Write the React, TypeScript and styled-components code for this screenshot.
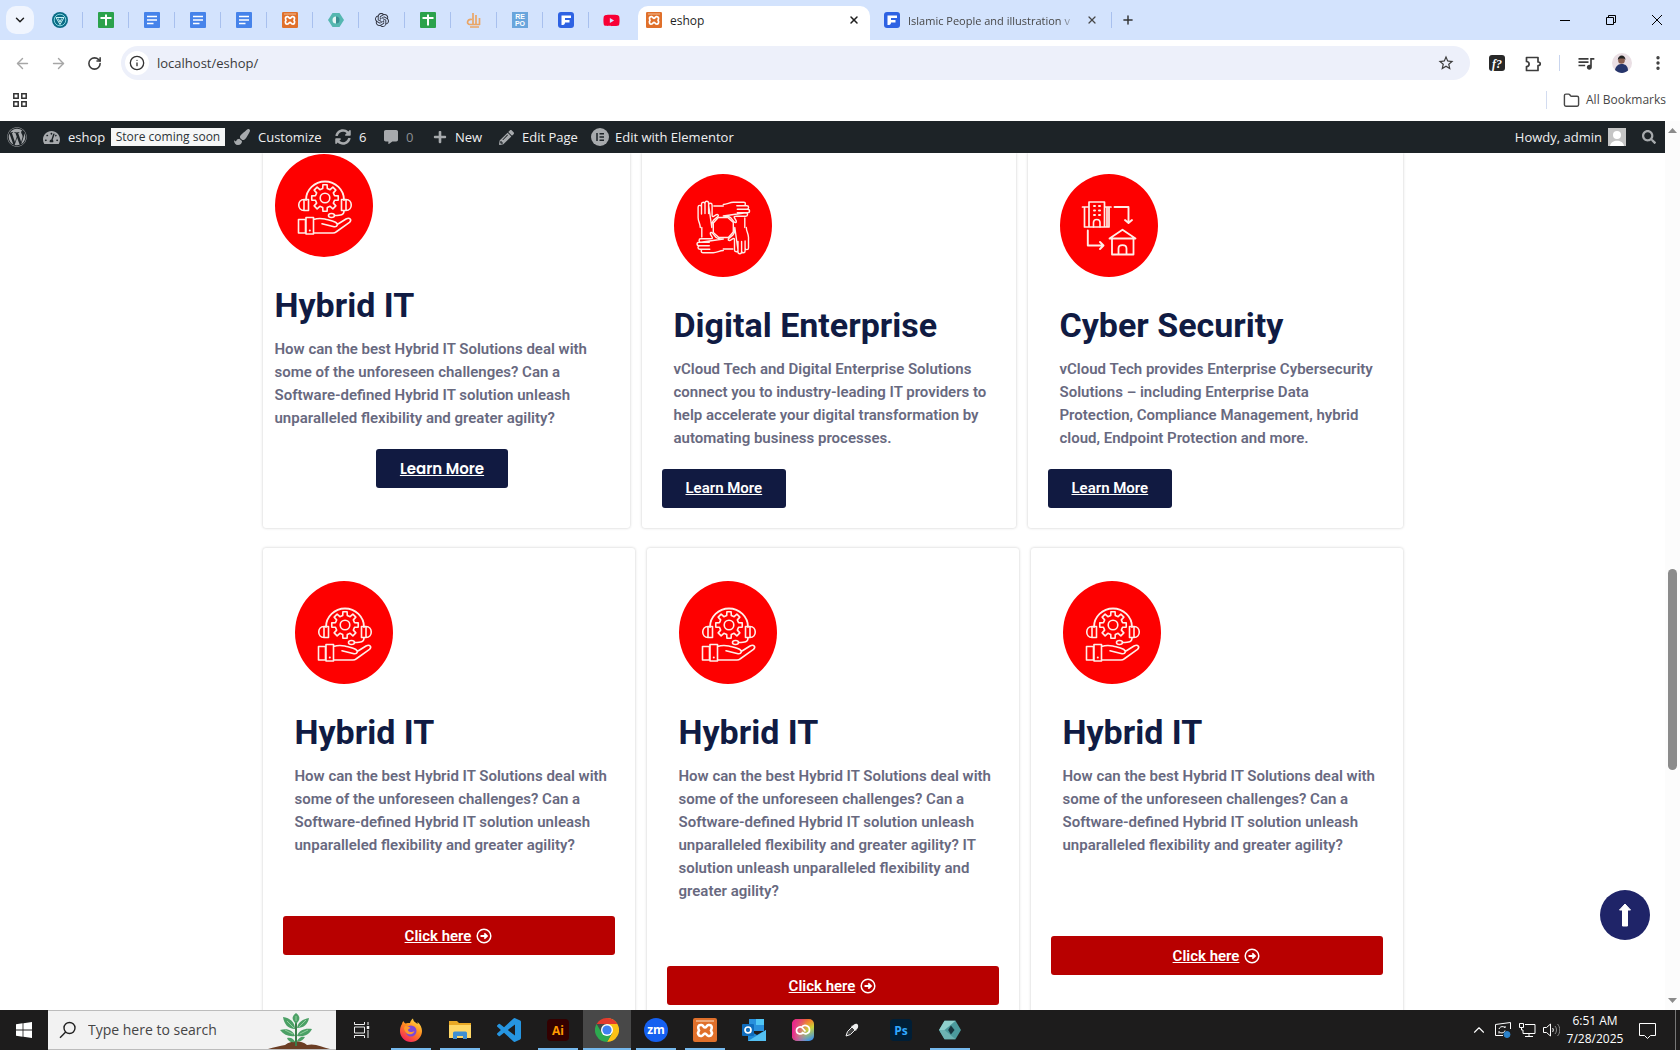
import React from "react";
import styled, { createGlobalStyle, css } from "styled-components";
import {
  FaWordpress,
  FaTachometerAlt,
  FaPaintBrush,
  FaSyncAlt,
  FaCommentAlt,
  FaPlus,
  FaPencilAlt,
  FaSearch,
  FaYoutube,
} from "react-icons/fa";
import { SiOpenai } from "react-icons/si";
import { MdOutlineQueueMusic, MdStarBorder } from "react-icons/md";
import {
  ArrowLeft,
  ArrowRight,
  ChevronDown,
  ChevronUp,
  EllipsisVertical,
  Folder,
  Info,
  Plus,
  RotateCw,
  X,
} from "lucide-react";

const UI_FONT = `"Segoe UI", "Open Sans", "Noto Sans", sans-serif`;
const BODY_FONT = `Roboto, "Open Sans", sans-serif`;

const GlobalStyle = createGlobalStyle`
  *, *::before, *::after { box-sizing: border-box; }
  body { margin: 0; background: #fff; font-family: ${UI_FONT}; overflow: hidden; }
  button, input { font: inherit; color: inherit; }
  h2, p { margin: 0; }
  svg { display: block; flex: none; }
`;

const Desktop = styled.div`
  height: 100vh;
  display: flex;
  flex-direction: column;
  overflow: hidden;
`;

const plainButton = css`
  display: flex;
  align-items: center;
  justify-content: center;
  border: 0;
  padding: 0;
  background: none;
`;

/* ---------- browser chrome ---------- */

const TabStrip = styled.div`
  flex: none;
  height: 40px;
  display: flex;
  align-items: flex-end;
  background: #d3e3fd;
`;

const TabSearchButton = styled.button`
  ${plainButton}
  width: 28px;
  height: 28px;
  margin: 0 3px 6px 6px;
  border-radius: 10px;
  background: #f0f5fe;
  color: #1f1f1f;
`;

const PinnedTab = styled.button<{ $divided: boolean }>`
  ${plainButton}
  width: 46px;
  height: 16px;
  margin-bottom: 12px;
  border-right: 1px solid ${(p) => (p.$divided ? "#a8c0ee" : "transparent")};
`;

const Tab = styled.div<{ $active?: boolean }>`
  display: flex;
  align-items: center;
  gap: 8px;
  width: ${(p) => (p.$active ? 232 : 238)}px;
  height: 34px;
  margin-left: 3px;
  padding: 0 ${(p) => (p.$active ? "8px 6px 8px" : "11px 6px 11px")};
  border-radius: 10px 10px 0 0;
  font-size: ${(p) => (p.$active ? 12 : 11)}px;
  line-height: 18px;
  color: ${(p) => (p.$active ? "#1f1f1f" : "#474747")};
  background: ${(p) => (p.$active ? "#fff" : "transparent")};
`;

const TabTitle = styled.span<{ $fade?: boolean }>`
  flex: 1;
  min-width: 0;
  padding-top: 2px;
  overflow: hidden;
  white-space: nowrap;
  ${(p) => p.$fade && "mask-image: linear-gradient(90deg, #000 90%, transparent);"}
`;

const InlineButton = styled.button`
  ${plainButton}
  width: 16px;
  height: 16px;
`;

const NewTab = styled.button`
  ${plainButton}
  width: 33px;
  height: 16px;
  margin-bottom: 12px;
  border-left: 1px solid #a8c0ee;
  color: #333;
`;

const WindowControls = styled.div`
  margin-left: auto;
  display: flex;
  align-self: stretch;
`;

const WindowButton = styled.button`
  ${plainButton}
  width: 46px;
  height: 40px;
`;

const Toolbar = styled.div`
  flex: none;
  height: 46px;
  display: flex;
  align-items: center;
  padding: 0 4px;
  background: #fff;
`;

const ToolButton = styled.button<{ $dim?: boolean }>`
  ${plainButton}
  width: 36px;
  height: 34px;
  color: ${(p) => (p.$dim ? "#a6a6a6" : "#3c3c3c")};
`;

const Omnibox = styled.label`
  flex: 1;
  height: 34px;
  display: flex;
  align-items: center;
  gap: 8px;
  margin: 0 9px;
  padding: 0 6px 0 4px;
  border-radius: 17px;
  background: #edf0fa;
`;

const SiteInfo = styled.span`
  width: 24px;
  height: 24px;
  display: flex;
  align-items: center;
  justify-content: center;
  border-radius: 12px;
  background: #fff;
  color: #333;
`;

const UrlInput = styled.input`
  flex: 1;
  border: 0;
  outline: 0;
  padding: 0;
  background: none;
  font-size: 13px;
  line-height: 20px;
  color: #3a3a3a;
`;

const ToolDivider = styled.span`
  width: 1px;
  height: 16px;
  margin: 0 8px;
  background: #c9d5ee;
`;

const BookmarksBar = styled.div`
  flex: none;
  height: 35px;
  display: flex;
  align-items: center;
  justify-content: space-between;
  padding: 0 14px 7px 12px;
  background: #fff;
  color: #474747;
`;

const AllBookmarks = styled.button`
  ${plainButton}
  gap: 6px;
  height: 18px;
  padding-left: 16px;
  border-left: 1px solid #d3dcf0;
  font-size: 12px;
  line-height: 18px;
`;

/* ---------- web page ---------- */

const Viewport = styled.div`
  flex: 1;
  min-height: 0;
  display: flex;
  position: relative;
  background: #fff;
`;

const Page = styled.div`
  flex: 1;
  min-width: 0;
  display: flex;
  flex-direction: column;
  overflow: hidden;
`;

const AdminBar = styled.nav`
  flex: none;
  height: 32px;
  display: flex;
  align-items: center;
  padding: 0 8px 0 7px;
  background: #1d2327;
  color: #f0f0f1;
  font-size: 13px;
  line-height: 18px;
  white-space: nowrap;
`;

const AdminLink = styled.a<{ $gap?: number; $width?: number }>`
  display: flex;
  align-items: center;
  gap: ${(p) => p.$gap ?? 8}px;
  width: ${(p) => (p.$width ? `${p.$width}px` : "auto")};
  color: inherit;
  text-decoration: none;
  svg { color: #a7aaad; }
`;

const StoreBadge = styled.a`
  width: 114px;
  height: 18px;
  margin-right: 9px;
  background: #f6f7f7;
  color: #2c3338;
  font-size: 12px;
  line-height: 18px;
  text-align: center;
  text-decoration: none;
`;

const Muted = styled.span`
  color: #8c8f94;
`;

const AdminRight = styled.div`
  margin-left: auto;
  display: flex;
  align-items: center;
  gap: 15px;
`;

const SearchLink = styled.button`
  ${plainButton}
  width: 16px;
  height: 16px;
  color: #a7aaad;
`;

const Content = styled.main`
  flex: 1;
  min-height: 0;
  overflow: hidden;
`;

const Services = styled.div`
  max-width: 1140px;
  margin: 0 auto;
  display: flex;
  flex-direction: column;
  gap: 20px;
  font-family: ${BODY_FONT};
`;

const CardRow = styled.section<{ $columns: string }>`
  display: grid;
  grid-template-columns: ${(p) => p.$columns};
  gap: 12px;
`;

const Card = styled.article<{ $kind: "flush" | "upper" | "lower" }>`
  display: flex;
  flex-direction: column;
  border-radius: ${(p) => (p.$kind === "lower" ? "3px" : "0 0 3px 3px")};
  box-shadow: 0 0 3px rgba(0, 0, 0, 0.22);
  background: #fff;
  padding: ${(p) =>
    p.$kind === "flush" ? "1px 20px 20px 0" : p.$kind === "upper" ? "21px 20px 20px" : "33px 20px 60px"};
`;

const ImageBox = styled.div`
  padding-left: 12px;
  svg { width: 98px; height: 103px; }
`;

const Title = styled.h2`
  margin: 28px 0 13px;
  color: #101b43;
  font-size: 34px;
  font-weight: 700;
  line-height: 40px;
`;

const Description = styled.p`
  color: #68697f;
  font-size: 15px;
  font-weight: 600;
  line-height: 23px;
`;

const LearnMore = styled.a<{ $centered?: boolean }>`
  align-self: ${(p) => (p.$centered ? "center" : "flex-start")};
  margin-top: 19px;
  margin-left: ${(p) => (p.$centered ? "12px" : "0")};
  padding: 0 24px;
  border-radius: 3px;
  background: #111a41;
  color: #fff;
  font-family: ${(p) => (p.$centered ? "Poppins, Inter, sans-serif" : BODY_FONT)};
  font-size: 15px;
  font-weight: 600;
  line-height: 39px;
`;

const ClickHere = styled.a<{ $space: number }>`
  display: flex;
  align-items: center;
  justify-content: center;
  gap: 5px;
  height: 39px;
  margin-top: ${(p) => p.$space}px;
  border-radius: 3px;
  background: #b80000;
  color: #fff;
  font-size: 15px;
  font-weight: 600;
  text-decoration: none;
  span { text-decoration: underline; }
`;

const ToTop = styled.button`
  ${plainButton}
  position: absolute;
  right: 30px;
  bottom: 70px;
  width: 50px;
  height: 50px;
  border-radius: 25px;
  background: #1f2468;
`;

const ScrollTrack = styled.div`
  flex: none;
  width: 15px;
  display: flex;
  flex-direction: column;
  align-items: center;
  padding: 5px 0;
  background: #fcfcfc;
`;

const ScrollSpace = styled.div<{ $grow: number }>`
  flex: ${(p) => p.$grow} 1 0;
`;

const ScrollThumb = styled.div`
  flex: 201 1 0;
  width: 9px;
  border-radius: 5px;
  background: #8b8b8b;
`;

/* ---------- taskbar ---------- */

const Taskbar = styled.footer`
  flex: none;
  height: 40px;
  display: flex;
  align-items: stretch;
  background: #1d1c1c;
  color: #fff;
`;

const StartButton = styled.button`
  ${plainButton}
  width: 48px;
`;

const TaskSearch = styled.label`
  width: 288px;
  display: flex;
  align-items: center;
  gap: 11px;
  padding-left: 11px;
  background: #f2f2f2;
  border: solid #bcbcbc;
  border-width: 1px 0;
  color: #333;
`;

const TaskSearchInput = styled.input`
  flex: 1;
  min-width: 0;
  border: 0;
  padding: 0;
  outline: 0;
  background: none;
  font-size: 14px;
  line-height: 20px;
  &::placeholder { color: #454545; opacity: 1; }
`;

const TaskList = styled.div`
  display: flex;
  gap: 1px;
  padding-left: 2px;
`;

const TaskButton = styled.button<{ $state: "idle" | "open" | "active" }>`
  ${plainButton}
  width: 48px;
  background: ${(p) =>
    p.$state === "active"
      ? "linear-gradient(#76b9ed, #76b9ed) bottom / 48px 2px no-repeat #484848"
      : p.$state === "open"
      ? "linear-gradient(#76b9ed, #76b9ed) bottom / 40px 2px no-repeat"
      : "none"};
`;

const Tray = styled.div`
  margin-left: auto;
  display: flex;
  align-items: center;
`;

const TrayButton = styled.button<{ $wide?: boolean }>`
  ${plainButton}
  width: ${(p) => (p.$wide ? 40 : 24)}px;
  height: 40px;
`;

const Clock = styled.time`
  width: 64px;
  display: flex;
  flex-direction: column;
  align-items: center;
  font-size: 12px;
  line-height: 18px;
  white-space: nowrap;
`;

const ShowDesktop = styled.button`
  width: 5px;
  height: 40px;
  margin-left: 8px;
  padding: 0;
  border: 0;
  border-left: 1px solid #777;
  background: none;
`;

/* ---------- drawings ---------- */

const gearPath = (cx: number, cy: number, outer: number, inner: number, teeth: number) => {
  const points: string[] = [];
  const step = (Math.PI * 2) / teeth;
  for (let i = 0; i < teeth; i++) {
    const a = i * step - Math.PI / 2;
    [
      [inner, -0.3],
      [outer, -0.2],
      [outer, 0.2],
      [inner, 0.3],
    ].forEach(([r, k]) => {
      points.push(`${(cx + r * Math.cos(a + k * step)).toFixed(2)} ${(cy + r * Math.sin(a + k * step)).toFixed(2)}`);
    });
  }
  return `M${points.join("L")}Z`;
};

const Disc = ({ children, label }: { children: React.ReactNode; label: string }) => (
  <svg viewBox="0 0 98 103" preserveAspectRatio="none" role="img" aria-label={label}>
    <ellipse cx="49" cy="51.5" rx="49" ry="51.5" fill="#fe0000" />
    <g fill="none" stroke="#ffeee8" strokeWidth="1.6" strokeLinejoin="round" strokeLinecap="round">
      {children}
    </g>
  </svg>
);

const SupportArt = () => (
  <Disc label="Support">
    <path d={gearPath(50, 44, 13.4, 9.8, 8)} />
    <circle cx="50" cy="44" r="4.8" />
    <path d="M31 46a19 18.500 0 0 1 38 0" strokeWidth="1.800" />
    <path d="M29 45.500c-7 0-7 11 0 11zM29 45.500h4.500v11h-4.500M71 45.500c7 0 7 11 0 11zM71 45.500h-4.500v11h4.500M69 57c0 4-3 4.500-9.500 4.500" />
    <ellipse cx="56.500" cy="61.500" rx="3" ry="2" />
    <path d="M23.500 65.500h7v13.500h-7zM31 63.500h7.500v16.500h-7.500zM38.500 65.500c6-2 9-1 12-.3 4 1 7 1.500 10 3 3 1.800 2 5-1.500 4.500l-12-3M63 70l8-5c4-2 6 1 3.500 3.300L61 78q-1 1-3 1H38.500" />
    <path d="M34.800 76.500v.1" strokeWidth="2" />
  </Disc>
);

const TeamArt = () => (
  <Disc label="Teamwork">
    <g transform="translate(49.300 53.500)" strokeWidth="1.400">
      {[0, 90, 180, 270].map((r) => (
        <g key={r} transform={`rotate(${r})`}>
          <path d="M-23 0c0-4-2.200-6-2.200-10v-10.500c0-2.200 3.400-2.200 3.400 0v7M-21.800-20.500v-3c0-2.400 3.500-2.400 3.500 0V-14M-18.300-23.500v-.8c0-2.600 3.600-2.600 3.600 0V-14M-14.700-22.500c0-2.300 3.500-2.300 3.500 0v9.500c0 2 .2 2.600 1.500 1.800l2.800-1.600c2.300-.8 2.600 1.200.8 2.400l-3.600 3c-1.300 1.500-1.800 3-1.800 7.400z" />
          <path d="M-21.500 0v9.500M-10-4.500L-5-10H4" />
        </g>
      ))}
    </g>
  </Disc>
);

const OfficeArt = () => (
  <Disc label="Office and home">
    <path d="M29 53V28h15.500v25M22.500 33H29M44.500 33H51M24.500 33v20h24.500V33M47 34v19" strokeWidth="1.700" />
    <path d="M33.500 53v-4.500c0-4 6.500-4 6.500 0V53" />
    {[32, 36.5, 41].map((y) => (
      <path key={y} d={`M34 ${y}h1M39 ${y}h1`} strokeWidth="2" />
    ))}
    <path d="M54.500 33h14v15.500M65 46l3.500 3 3.500-3M27.800 56.500v15h15.500M40 68l3.500 3.500L40 75" strokeWidth="1.900" />
    <path d="M49.500 64.500l13-8.800 13 8.800zM52 64.500V80.500h21.500v-16M58.500 80.500v-6c0-4.500 8-4.500 8 0v6" strokeWidth="1.800" />
  </Disc>
);

const CircleArrow = () => (
  <svg width="16" height="16" viewBox="0 0 16 16" fill="none" stroke="#fff" strokeWidth="1.500" aria-hidden="true">
    <circle cx="8" cy="8" r="6.800" />
    <path d="M4.500 8h6M8.300 5.300L11 8l-2.700 2.700" strokeWidth="1.800" />
  </svg>
);

const GemIcon = () => (
  <svg width="16" height="16" viewBox="0 0 16 16">
    <circle cx="8" cy="8" r="8" fill="#0b6c86" />
    <circle cx="8" cy="8" r="5.800" fill="none" stroke="#7fd3dd" />
    <path d="M4 5.500h8L8 12.500zM6.300 6.500L8 10l1.700-3.500" fill="none" stroke="#c8f2f4" />
  </svg>
);

const SheetIcon = () => (
  <svg width="16" height="16" viewBox="0 0 16 16">
    <rect width="16" height="16" rx="1" fill="#2ba24c" />
    <path d="M2.500 6h11M8 2.500v11" stroke="#fff" strokeWidth="2" />
  </svg>
);

const DocIcon = () => (
  <svg width="16" height="16" viewBox="0 0 16 16">
    <rect width="16" height="16" rx="1" fill="#4683ea" />
    <path d="M3 4.500h10M3 8h10M3 11.500h6.500" stroke="#fff" strokeWidth="1.600" />
  </svg>
);

const XamppIcon = ({ size = 16 }: { size?: number }) => (
  <svg width={size} height={size} viewBox="0 0 24 24">
    <rect width="24" height="24" rx="2" fill="#e0702b" />
    <path
      d="M8.500 7C5 6.500 4.500 9.500 6 12.500c-2 3-.5 6 2.500 5.500 2-.3 2-2.500 3.500-2.500s1.500 2.200 3.500 2.500c3 .5 4.500-2.500 2.500-5.500 1.500-3 1-6-2.500-5.500-2 .3-2 2.500-3.500 2.500S10.500 7.300 8.500 7z"
      fill="none"
      stroke="#fff"
      strokeWidth="2.600"
    />
    <path d="M3 3h18" stroke="#f6cfae" strokeWidth="1.200" />
  </svg>
);

const HexIcon = ({ size = 16 }: { size?: number }) => (
  <svg width={size} height={size} viewBox="0 0 24 24">
    <path d="M6 2h12l6 10-6 10H6L0 12z" fill="#4b9a9c" />
    <path d="M6 2h12l-6 5-6 5-6 0z" fill="#8fd0cd" />
    <path d="M0 12h6l6 5 6 5H6z" fill="#6db3b2" />
    <path d="M13 7l4 5-4 5-3-5z" fill="#16343d" />
  </svg>
);

const TealDot = () => (
  <svg width="16" height="16" viewBox="0 0 16 16">
    <path d="M4.500 1h7L16 8l-4.500 7h-7L0 8z" fill="#55b7b0" />
    <path d="M8 4.500v7a3.500 3.500 0 0 1 0-7z" fill="#e8f7f6" />
    <path d="M8 4.500a3.500 3.500 0 0 1 0 7z" fill="#398e91" />
  </svg>
);

const SignIcon = () => (
  <svg width="16" height="16" viewBox="0 0 16 16" fill="none" stroke="#eaa565" strokeWidth="1.700">
    <path d="M7 1v11M10 3v9M13.500 6v7M6 7.500c-5-1-6 5-2 5h10M4 15h9" />
  </svg>
);

const RepoIcon = () => (
  <svg width="16" height="16" viewBox="0 0 16 16">
    <rect width="16" height="16" fill="#69a5dc" />
    <text x="8" y="7.300" fill="#fff" fontFamily="Liberation Sans" fontWeight="700" fontSize="7" textAnchor="middle">RE</text>
    <text x="8" y="14" fill="#fff" fontFamily="Liberation Sans" fontWeight="700" fontSize="7" textAnchor="middle">PO</text>
  </svg>
);

const FlagIcon = () => (
  <svg width="16" height="16" viewBox="0 0 16 16">
    <rect width="16" height="16" rx="3" fill="#2e62e3" />
    <path d="M3.500 13V3.500h9.500v2.600H7v2h4.500v2.400H7c0 2-1 2.500-3.500 2.500z" fill="#fff" />
  </svg>
);

const ElementorIcon = () => (
  <svg width="18" height="18" viewBox="0 0 18 18">
    <circle cx="9" cy="9" r="9" fill="#a7aaad" />
    <path d="M6 5v8M8.500 5.800H13M8.500 9H13M8.500 12.200H13" stroke="#1d2327" strokeWidth="1.500" />
  </svg>
);

const PuzzleIcon = () => (
  <svg width="17" height="17" viewBox="0 0 17 17" fill="none" stroke="#3c3c3c" strokeWidth="1.700" strokeLinejoin="round">
    <path d="M1.500 2.500H13V7c3 0 3 3.600 0 3.600v4.900H1.500v-4c3.500 0 3.500-5 0-5z" />
  </svg>
);

const SquareBadge = ({ bg, fg, text }: { bg: string; fg: string; text: string }) => (
  <svg width="22" height="22" viewBox="0 0 22 22">
    <rect width="22" height="22" rx="4" fill={bg} />
    <text x="11" y="15.500" textAnchor="middle" fill={fg} fontSize="12" fontWeight="700" fontFamily="Open Sans">{text}</text>
  </svg>
);

const FirefoxIcon = () => (
  <svg width="24" height="24" viewBox="0 0 24 24">
    <defs>
      <linearGradient id="fx" x1="0.8" y1="0" x2="0.2" y2="1">
        <stop offset="0" stopColor="#ffe14a" />
        <stop offset="0.45" stopColor="#ff8a1f" />
        <stop offset="1" stopColor="#f5195f" />
      </linearGradient>
    </defs>
    <path d="M3 6c0-1 .5-2 1.500-3 .3 1.200 1 2 2 2.500C8 5 9.500 5 11 5c.5-2 1.500-3.500 3-4.500C14.500 4 17 4.500 18.500 6c.2-.8.2-1.500 0-2 3 2.500 4.500 6 4.500 9a11 11 0 0 1-22 0c0-3 .7-5 2-7z" fill="url(#fx)" />
    <circle cx="12" cy="13" r="5.500" fill="#7b48d8" />
    <path d="M6 8c2 0 4 .5 5.500 2C10 11 9 11 9 12.500c1.500 2 4.500 2 6.500.5-1 4-7 4.500-9 1S5 10 6 8z" fill="#ff9a2b" />
  </svg>
);

const ExplorerIcon = () => (
  <svg width="24" height="20" viewBox="0 0 24 20">
    <path d="M1 1h8l2 2h12v14H1z" fill="#e9a825" />
    <path d="M1 5h22v13H1z" fill="#ffd766" />
    <path d="M5 19v-6q0-1.500 1.500-1.500h11Q19 11.500 19 13v6h-4v-3H9v3z" fill="#3f8fd0" />
  </svg>
);

const CodeIcon = () => (
  <svg width="24" height="24" viewBox="0 0 24 24">
    <path fill="#2695e0" d="M23.150 2.587L18.210.210a1.494 1.494 0 0 0-1.705.290l-9.460 8.630-4.120-3.128a.999.999 0 0 0-1.276.057L.327 7.261A1 1 0 0 0 .326 8.740L3.899 12 .326 15.260a1 1 0 0 0 .001 1.479L1.650 17.940a.999.999 0 0 0 1.276.057l4.120-3.128 9.460 8.630a1.492 1.492 0 0 0 1.704.290l4.942-2.377A1.500 1.500 0 0 0 24 20.060V3.939a1.500 1.500 0 0 0-.850-1.352zm-5.146 14.861L10.826 12l7.178-5.448v10.896z" />
  </svg>
);

const ChromeIcon = () => (
  <svg width="24" height="24" viewBox="0 0 24 24">
    <path d="M12 12V0a12 12 0 0 1 10.400 6 12 12 0 0 1-10.400 18l5.200-9z" fill="#fbc116" />
    <path d="M1.600 6a12 12 0 0 1 20.800 0H12z" fill="#e33b2e" />
    <path d="M1.600 6A12 12 0 0 0 12 24l5.200-9H6.800z" fill="#2da94f" />
    <circle cx="12" cy="12" r="6" fill="#fff" />
    <circle cx="12" cy="12" r="4.600" fill="#3f80f0" />
  </svg>
);

const ZoomIcon = () => (
  <svg width="24" height="24" viewBox="0 0 24 24">
    <circle cx="12" cy="12" r="12" fill="#1560f0" />
    <text x="12" y="16" textAnchor="middle" fill="#fff" fontSize="12" fontWeight="700" fontFamily="Open Sans">zm</text>
  </svg>
);

const OutlookIcon = () => (
  <svg width="24" height="22" viewBox="0 0 24 22">
    <path d="M7 0h15v12H7z" fill="#2890dc" />
    <path d="M14 0h8v6h-8z" fill="#4fc5f4" />
    <path d="M6 11l9 5 9-5v11H6z" fill="#1e88d6" />
    <path d="M24 11L6 22h18z" fill="#54c0f2" />
    <rect y="5" width="12" height="12" rx="1" fill="#0f6cbd" />
    <circle cx="6" cy="11" r="3" fill="none" stroke="#fff" strokeWidth="1.700" />
  </svg>
);

const CreativeIcon = () => (
  <svg width="22" height="22" viewBox="0 0 22 22">
    <defs>
      <linearGradient id="cc" x1="0.3" y1="0" x2="0.8" y2="1">
        <stop offset="0" stopColor="#f0402d" />
        <stop offset="0.3" stopColor="#f08b2d" />
        <stop offset="0.55" stopColor="#c9d23a" />
        <stop offset="1" stopColor="#3b90ee" />
      </linearGradient>
      <linearGradient id="cc-left">
        <stop offset="0" stopColor="#ee1f8f" />
        <stop offset="0.7" stopColor="#c04be0" stopOpacity="0" />
      </linearGradient>
    </defs>
    <rect width="22" height="22" rx="5" fill="url(#cc)" />
    <rect width="22" height="22" rx="5" fill="url(#cc-left)" />
    <path d="M11.500 13.500c-3 2.500-7 1.500-7-2s4-4.500 6-2.500l3 3.500M9.500 8.500c2-3.500 8-2.500 8 2.500 0 4-5 5-7.500 2" fill="none" stroke="#fff" strokeWidth="1.700" />
  </svg>
);

const PenIcon = () => (
  <svg width="14" height="14" viewBox="0 0 14 14">
    <path d="M1 13l1.500-4.500L7 4l3 3-4.500 4.500z" fill="#444" stroke="#eee" />
    <path d="M6 3l5 5 .5-1.500C14 5 13.500 1 11.500.800S8.500 2 8 2.500z" fill="#eee" />
  </svg>
);

const PlantIcon = () => (
  <svg width="68" height="38" viewBox="0 0 68 38">
    <path d="M0 38c6-2 12-3 17-4 7-5 16-5 22 0 8-2 15 2 23 4z" fill="#6b3e25" />
    <path d="M28 35V6" stroke="#3c7e4b" strokeWidth="2" />
    <g fill="#4ca066">
      <path d="M28 13c-5-5-4-8 0-11 5 4 4 7 0 11z" />
      <path d="M27 18C20 18 16 13 15 6c7 1 12 5 12 12zM29 17c1-6 6-9 12-10-1 6-5 10-12 10zM27 25c-6 1-11-1-15-6 7-2 13 0 15 6zM29 25c2-6 8-8 15-7-3 6-8 8-15 7zM27 31c-4 1-7-1-8-4 4-1 7 1 8 4zM29 30c2-3 4-5 8-4-2 3-4 5-8 4z" />
    </g>
    <path d="M28 10V5M26 17l-7-7M31 16l7-7M25 23l-8-4M32 23l8-4" stroke="#8fcf9b" />
  </svg>
);

const services = [
  {
    kind: "flush" as const,
    art: <SupportArt />,
    title: "Hybrid IT",
    text: "How can the best Hybrid IT Solutions deal with some of the unforeseen challenges? Can a Software-defined Hybrid IT solution unleash unparalleled flexibility and greater agility?",
  },
  {
    kind: "upper" as const,
    art: <TeamArt />,
    title: "Digital Enterprise",
    text: "vCloud Tech and Digital Enterprise Solutions connect you to industry-leading IT providers to help accelerate your digital transformation by automating business processes.",
  },
  {
    kind: "upper" as const,
    art: <OfficeArt />,
    title: "Cyber Security",
    text: "vCloud Tech provides Enterprise Cybersecurity Solutions – including Enterprise Data Protection, Compliance Management, hybrid cloud, Endpoint Protection and more.",
  },
];

const offers = [
  { space: 59, extra: "" },
  { space: 63, extra: " IT solution unleash unparalleled flexibility and greater agility?" },
  { space: 79, extra: "" },
];

const pinned: [string, React.ReactNode][] = [
  ["Gem", <GemIcon />],
  ["Sheet", <SheetIcon />],
  ["Document one", <DocIcon />],
  ["Document two", <DocIcon />],
  ["Document three", <DocIcon />],
  ["XAMPP", <XamppIcon />],
  ["Teal", <TealDot />],
  ["ChatGPT", <SiOpenai size={14} color="#2b2e3a" />],
  ["Second sheet", <SheetIcon />],
  ["Sign", <SignIcon />],
  ["Repo", <RepoIcon />],
  ["Flaticon", <FlagIcon />],
  ["YouTube", <FaYoutube size={17} color="#f80035" />],
];

type TaskState = "idle" | "open" | "active";
const tasks: [string, TaskState, React.ReactNode][] = [
  [
    "Task view",
    "idle",
    <svg width="16" height="16" viewBox="0 0 16 16" fill="none" stroke="#eee">
      <path d="M.500 0v2.500h10V0M.500 5h10v6H.500zM.500 16v-2.500h10V16M14 0v3M14 8v8" />
      <path d="M14 4v3" strokeWidth="2.500" />
    </svg>,
  ],
  ["Firefox", "open", <FirefoxIcon />],
  ["File Explorer", "open", <ExplorerIcon />],
  ["Visual Studio Code", "idle", <CodeIcon />],
  ["Illustrator", "open", <SquareBadge bg="#330000" fg="#ff9a00" text="Ai" />],
  ["Chrome", "active", <ChromeIcon />],
  ["Zoom", "open", <ZoomIcon />],
  ["XAMPP", "open", <XamppIcon size={24} />],
  ["Outlook", "idle", <OutlookIcon />],
  ["Creative Cloud", "idle", <CreativeIcon />],
  ["Pen", "idle", <PenIcon />],
  ["Photoshop", "idle", <SquareBadge bg="#001e36" fg="#31a8ff" text="Ps" />],
  ["Hexagon", "open", <HexIcon size={22} />],
];

const Browser = () => (
  <>
    <TabStrip>
      <TabSearchButton aria-label="Search tabs"><ChevronDown size={14} strokeWidth={2.5} /></TabSearchButton>
      {pinned.map(([name, icon], i) => (
        <PinnedTab key={name} aria-label={name} $divided={i < pinned.length - 1}>{icon}</PinnedTab>
      ))}
      <Tab $active>
        <XamppIcon />
        <TabTitle>eshop</TabTitle>
        <InlineButton aria-label="Close eshop"><X size={12} strokeWidth={3} /></InlineButton>
      </Tab>
      <Tab>
        <FlagIcon />
        <TabTitle $fade>Islamic People and illustration v</TabTitle>
        <InlineButton aria-label="Close tab"><X size={12} strokeWidth={2.5} /></InlineButton>
      </Tab>
      <NewTab aria-label="New tab"><Plus size={14} strokeWidth={2.5} /></NewTab>
      <WindowControls>
        <WindowButton aria-label="Minimize">
          <svg width="10" height="10" stroke="#000"><path d="M0 5.500h10" /></svg>
        </WindowButton>
        <WindowButton aria-label="Restore">
          <svg width="10" height="10" fill="none" stroke="#000"><path d="M.500 2.500h7v7h-7zM2.500 2.500v-2h7v7h-2" /></svg>
        </WindowButton>
        <WindowButton aria-label="Close window">
          <svg width="10" height="10" stroke="#000"><path d="M0 0l10 10M10 0L0 10" /></svg>
        </WindowButton>
      </WindowControls>
    </TabStrip>
    <Toolbar>
      <ToolButton $dim aria-label="Back"><ArrowLeft size={17} /></ToolButton>
      <ToolButton $dim aria-label="Forward"><ArrowRight size={17} /></ToolButton>
      <ToolButton aria-label="Reload"><RotateCw size={15} strokeWidth={2.5} /></ToolButton>
      <Omnibox aria-label="Address">
        <SiteInfo><Info size={16} /></SiteInfo>
        <UrlInput defaultValue="localhost/eshop/" />
        <ToolButton aria-label="Bookmark"><MdStarBorder size={18} /></ToolButton>
      </Omnibox>
      <ToolButton aria-label="Font finder">
        <svg width="16" height="16" viewBox="0 0 16 16">
          <rect width="16" height="16" rx="3" fill="#282828" />
          <text x="8" y="12.500" textAnchor="middle" fill="#fff" fontSize="12" fontStyle="italic" fontWeight="700" fontFamily="Liberation Serif">f?</text>
        </svg>
      </ToolButton>
      <ToolButton aria-label="Extensions"><PuzzleIcon /></ToolButton>
      <ToolDivider />
      <ToolButton aria-label="Media"><MdOutlineQueueMusic size={20} /></ToolButton>
      <ToolButton aria-label="Profile">
        <svg width="20" height="20" viewBox="0 0 20 20">
          <circle cx="10" cy="10" r="10" fill="#eadfe4" />
          <path d="M3 17c1-5 4-6 7-6s6 2 6 6.500c-4 3.500-9 3-13-.500z" fill="#26356b" />
          <circle cx="9.500" cy="7.500" r="3.300" fill="#8a5f50" />
          <path d="M5.800 7c0-6 8-6 7.600 0l-1.400-1.500H7.500z" fill="#222" />
        </svg>
      </ToolButton>
      <ToolButton aria-label="Menu"><EllipsisVertical size={18} strokeWidth={2.5} /></ToolButton>
    </Toolbar>
    <BookmarksBar>
      <InlineButton aria-label="Apps">
        <svg width="14" height="14" viewBox="0 0 14 14" fill="none" stroke="#333" strokeWidth="1.500">
          <path d="M.800.800h4.400v4.400H.800zM8.800.800h4.400v4.400H8.800zM.800 8.800h4.400v4.400H.800zM8.800 8.800h4.400v4.400H8.800z" />
        </svg>
      </InlineButton>
      <AllBookmarks><Folder size={17} />All Bookmarks</AllBookmarks>
    </BookmarksBar>
  </>
);

const WordPressBar = () => (
  <AdminBar>
    <AdminLink href="#" $width={36} aria-label="WordPress"><FaWordpress size={20} /></AdminLink>
    <AdminLink href="#" $width={68}><FaTachometerAlt size={17} />eshop</AdminLink>
    <StoreBadge href="#">Store coming soon</StoreBadge>
    <AdminLink href="#" $width={101}><FaPaintBrush size={16} />Customize</AdminLink>
    <AdminLink href="#" $width={49}><FaSyncAlt size={16} />6</AdminLink>
    <AdminLink href="#" $width={49}><FaCommentAlt size={14} /><Muted>0</Muted></AdminLink>
    <AdminLink href="#" $width={66}><FaPlus size={14} />New</AdminLink>
    <AdminLink href="#" $width={92}><FaPencilAlt size={15} />Edit Page</AdminLink>
    <AdminLink href="#" $gap={6}><ElementorIcon />Edit with Elementor</AdminLink>
    <AdminRight>
      <AdminLink href="#" $gap={6}>
        Howdy, admin
        <svg width="18" height="18" viewBox="0 0 18 18">
          <rect width="18" height="18" fill="#c5c5c5" />
          <circle cx="9" cy="7" r="4" fill="#fff" />
          <path d="M2 18c1-7 13-7 14 0z" fill="#fff" />
        </svg>
      </AdminLink>
      <SearchLink aria-label="Search"><FaSearch size={14} /></SearchLink>
    </AdminRight>
  </AdminBar>
);

export default function App() {
  return (
    <Desktop>
      <GlobalStyle />
      <Browser />
      <Viewport>
        <Page>
          <WordPressBar />
          <Content>
            <Services>
              <CardRow $columns="367fr 374fr 375fr">
                {services.map((s) => (
                  <Card key={s.title} $kind={s.kind}>
                    <ImageBox>
                      {s.art}
                      <Title>{s.title}</Title>
                      <Description>{s.text}</Description>
                    </ImageBox>
                    <LearnMore href="#" $centered={s.kind === "flush"}>Learn More</LearnMore>
                  </Card>
                ))}
              </CardRow>
              <CardRow $columns="1fr 1fr 1fr">
                {offers.map((o) => (
                  <Card key={o.space} $kind="lower">
                    <ImageBox>
                      <SupportArt />
                      <Title>Hybrid IT</Title>
                      <Description>{services[0].text + o.extra}</Description>
                    </ImageBox>
                    <ClickHere href="#" $space={o.space}>
                      <span>Click here</span>
                      <CircleArrow />
                    </ClickHere>
                  </Card>
                ))}
              </CardRow>
            </Services>
          </Content>
        </Page>
        <ScrollTrack>
          <svg width="9" height="8"><path d="M0 7l4.500-5L9 7z" fill="#8b8b8b" /></svg>
          <ScrollSpace $grow={435} />
          <ScrollThumb />
          <ScrollSpace $grow={227} />
          <svg width="9" height="8"><path d="M0 1l4.500 5L9 1z" fill="#8b8b8b" /></svg>
        </ScrollTrack>
        <ToTop aria-label="Back to top">
          <svg width="14" height="24" viewBox="0 0 14 24">
            <path d="M7 1l5.500 6H9.500v16h-5V7h-3z" fill="#fff" stroke="#fff" strokeLinejoin="round" />
          </svg>
        </ToTop>
      </Viewport>
      <Taskbar>
        <StartButton aria-label="Start">
          <svg width="16" height="16" viewBox="0 0 16 16" fill="#fff">
            <path d="M0 2.200L6.600 1.300v6.300H0zM7.400 1.200L16 0v7.600H7.400zM0 8.400h6.600v6.300L0 13.800zM7.400 8.400H16V16l-8.600-1.200z" />
          </svg>
        </StartButton>
        <TaskSearch aria-label="Search">
          <svg width="18" height="18" viewBox="0 0 18 18" fill="none" stroke="#222" strokeWidth="1.400">
            <circle cx="10.500" cy="7" r="5.500" />
            <path d="M6.700 11L1 16.800" />
          </svg>
          <TaskSearchInput placeholder="Type here to search" />
          <PlantIcon />
        </TaskSearch>
        <TaskList>
          {tasks.map(([name, state, icon]) => (
            <TaskButton key={name} aria-label={name} $state={state}>{icon}</TaskButton>
          ))}
        </TaskList>
        <Tray>
          <TrayButton aria-label="Show hidden icons"><ChevronUp size={18} strokeWidth={1.5} /></TrayButton>
          <TrayButton aria-label="Updates">
            <svg width="18" height="18" viewBox="0 0 18 18" fill="none" stroke="#fff">
              <path d="M16.500 8V1.500L1.500 3.500v11H9M5 8c1-3 5-3 6-1V5M11 9.500c-1 3-5 3-6 1V12.500" />
              <circle cx="13" cy="13.500" r="3" fill="#2c82c9" stroke="#2c82c9" />
            </svg>
          </TrayButton>
          <TrayButton aria-label="Network">
            <svg width="17" height="16" viewBox="0 0 17 16" fill="none" stroke="#fff">
              <path d="M6 2.500h10v9H4V8M10 11.500v3M6 14.500h8M.500 1.500h4v4h-4zM2.500 5.500V8H4" />
            </svg>
          </TrayButton>
          <TrayButton aria-label="Volume">
            <svg width="17" height="14" viewBox="0 0 17 14" fill="none" stroke="#fff">
              <path d="M.500 4.500h3l4-3.500v12l-4-3.500h-3zM9.500 5c1 1 1 3 0 4" />
              <path d="M12 3c2 2 2 6 0 8M14.500 1c3 3 3 9 0 12" stroke="#888" />
            </svg>
          </TrayButton>
          <Clock dateTime="2025-07-28T06:51">
            <span>6:51 AM</span>
            <span>7/28/2025</span>
          </Clock>
          <TrayButton $wide aria-label="Notifications">
            <svg width="17" height="17" viewBox="0 0 17 17" fill="none" stroke="#fff">
              <path d="M.500 1.500h16v12h-5l-3 3-3-3h-5z" />
            </svg>
          </TrayButton>
          <ShowDesktop aria-label="Show desktop" />
        </Tray>
      </Taskbar>
    </Desktop>
  );
}
